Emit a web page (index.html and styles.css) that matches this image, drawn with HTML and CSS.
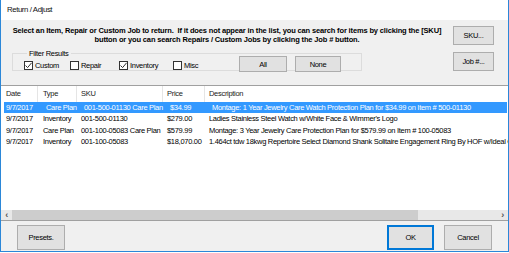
FILE: index.html
```html
<!DOCTYPE html>
<html lang="en">
  <head>
    <meta charset="UTF-8" />
    <title>Return / Adjust</title>
    <link rel="stylesheet" href="styles.css">
  </head>
  <body>
    <div class="window">
      <div class="titlebar">Return / Adjust</div>
      <div class="dialog">
        <div class="top">
          <div class="left">
            <p class="intro">
              Select an Item, Repair or Custom Job to return.&nbsp; If it does not appear in the list, you can search for items by clicking the [SKU]<br />
              button or you can search Repairs / Custom Jobs by clicking the Job # button.
            </p>
            <fieldset class="filter">
              <legend>Filter Results</legend>
              <label class="check">
                <span class="box">
                  <svg viewBox="0 0 9 9" width="9" height="9"><path d="M1.5 4.5 L3.6 6.6 L7.6 1.8" fill="none" stroke="#333" stroke-width="1" /></svg>
                </span>
                Custom
              </label>
              <label class="check">
                <span class="box"></span>
                Repair
              </label>
              <label class="check">
                <span class="box">
                  <svg viewBox="0 0 9 9" width="9" height="9"><path d="M1.5 4.5 L3.6 6.6 L7.6 1.8" fill="none" stroke="#333" stroke-width="1" /></svg>
                </span>
                Inventory
              </label>
              <label class="check">
                <span class="box"></span>
                Misc
              </label>
              <div class="filter-btn"><button class="btn btn-all">All</button></div>
              <div class="filter-btn"><button class="btn btn-none">None</button></div>
            </fieldset>
          </div>
          <div class="side">
            <button class="btn btn-side">SKU...</button>
            <button class="btn btn-side">Job #...</button>
          </div>
        </div>

        <div class="list">
          <div class="row list-head">
            <div class="cell c-date">Date</div>
            <div class="cell c-type">Type</div>
            <div class="cell">SKU</div>
            <div class="cell">Price</div>
            <div class="cell">Description</div>
          </div>
          <div class="list-body">
            <div class="row selected">
              <div class="cell c-date">9/7/2017</div>
              <div class="cell c-type">Care Plan</div>
              <div class="cell">001-500-01130 Care Plan</div>
              <div class="cell">$34.99</div>
              <div class="cell">Montage: 1 Year Jewelry Care Watch Protection Plan for $34.99 on Item # 500-01130</div>
            </div>
            <div class="row">
              <div class="cell c-date">9/7/2017</div>
              <div class="cell c-type">Inventory</div>
              <div class="cell">001-500-01130</div>
              <div class="cell">$279.00</div>
              <div class="cell">Ladies Stainless Steel Watch w/White Face &amp; Wimmer's Logo</div>
            </div>
            <div class="row">
              <div class="cell c-date">9/7/2017</div>
              <div class="cell c-type">Care Plan</div>
              <div class="cell">001-100-05083 Care Plan</div>
              <div class="cell">$579.99</div>
              <div class="cell">Montage: 3 Year Jewelry Care Protection Plan for $579.99 on Item # 100-05083</div>
            </div>
            <div class="row">
              <div class="cell c-date">9/7/2017</div>
              <div class="cell c-type">Inventory</div>
              <div class="cell">001-100-05083</div>
              <div class="cell">$18,070.00</div>
              <div class="cell">1.464ct tdw 18kwg Repertoire Select Diamond Shank Solitaire Engagement Ring By HOF w/Ideal Cut Diamond</div>
            </div>
          </div>
          <div class="hscroll">
            <span class="arrow">&lsaquo;</span>
            <div class="track"><div class="thumb"></div></div>
            <span class="arrow">&rsaquo;</span>
          </div>
        </div>

        <div class="footer">
          <button class="btn btn-foot">Presets.</button>
          <div class="footer-right">
            <button class="btn btn-foot btn-default">OK</button>
            <button class="btn btn-foot">Cancel</button>
          </div>
        </div>
      </div>
    </div>
  </body>
</html>
```

FILE: styles.css
```css
:root {
  --face: #f0f0f0;
  --accent: #2b87d8;
  --btn: #e1e1e1;
  --btn-border: #adadad;
  --select: #3399ff;
  --text: #000;
}
body {
  margin: 0;
  background: #fff;
  font-family: "Liberation Sans", Arial, sans-serif;
  font-size: 7.5px;
  letter-spacing: -0.3px;
  color: var(--text);
}
.window {
  width: 507px;
  height: 251px;
  border: 1px solid var(--accent);
  border-top: none;
  display: flex;
  flex-direction: column;
  background: var(--face);
}
.titlebar {
  height: 20px;
  line-height: 20px;
  background: #fff;
  padding-left: 6px;
  font-size: 7.8px;
  letter-spacing: -0.4px;
  color: #111;
}
.dialog {
  flex: 1;
  display: flex;
  flex-direction: column;
}
.top {
  height: 65px;
  display: flex;
  padding: 0 14px 0 11px;
}
.left {
  width: 430px;
}
.intro {
  margin: 6px 0 0 0;
  text-align: center;
  font-weight: bold;
  line-height: 9px;
  letter-spacing: -0.15px;
}
.filter {
  margin: 5px 0 0 0;
  width: 337px;
  height: 20px;
  padding: 0 0 0 11px;
  border: 1px solid #dcdcdc;
  display: grid;
  grid-template-columns: 46px 49px 54px 66px 56px 46px;
  align-items: center;
}
.filter legend {
  padding: 0 2px;
  margin-left: 3px;
  line-height: 9px;
}
.check {
  display: flex;
  align-items: center;
  gap: 2px;
  margin-top: 1px;
}
.box {
  width: 9px;
  height: 9px;
  border: 1px solid #333;
  background: #fff;
  box-sizing: border-box;
  display: flex;
}
.box svg {
  margin: -1px;
}
.btn {
  font-family: inherit;
  font-size: 7.5px;
  letter-spacing: -0.3px;
  background: var(--btn);
  border: 1px solid var(--btn-border);
  color: #000;
  padding: 0;
  margin: 0;
}
.btn-all {
  width: 48px;
  height: 16px;
  margin-top: -2px;
}
.btn-none {
  width: 46px;
  height: 16px;
  margin-top: -2px;
}
.side {
  margin-left: auto;
  padding-top: 6px;
  display: flex;
  flex-direction: column;
  gap: 7px;
}
.btn-side {
  width: 41px;
  height: 19px;
}
.list {
  height: 134px;
  background: #fff;
  border-top: 1px solid #a0a0a0;
  border-bottom: 1px solid #a0a0a0;
  display: flex;
  flex-direction: column;
  overflow: hidden;
}
.row {
  display: grid;
  grid-template-columns: 36px 39px 86px 42px 1fr;
  height: 11.5px;
  line-height: 11.5px;
  white-space: nowrap;
}
.cell {
  padding-left: 4px;
  overflow: hidden;
}
.cell + .cell {
  border-left: 1px solid transparent;
}
.c-date,
.c-type {
  padding-left: 5px;
}
.list-head {
  height: 15.5px;
  line-height: 16px;
  color: #222;
}
.list-head .cell + .cell {
  border-left-color: #e5e5e5;
}
.list-body {
  flex: 1;
}
.row.selected {
  background: var(--select);
  color: #fff;
  margin: 0 1px 0 3px;
}
.row.selected .c-date {
  padding-left: 2px;
}
.hscroll {
  height: 10px;
  display: flex;
  align-items: center;
  background: #e8e8e8;
}
.arrow {
  width: 11px;
  text-align: center;
  font-size: 9px;
  font-weight: bold;
  color: #555;
  line-height: 10px;
}
.track {
  flex: 1;
  height: 100%;
}
.thumb {
  width: 406px;
  height: 100%;
  background: #cdcdcd;
}
.footer {
  flex: 1;
  display: flex;
  align-items: flex-start;
  padding: 4px 16px 0 16px;
}
.footer-right {
  margin-left: auto;
  display: flex;
  gap: 10px;
}
.btn-foot {
  width: 48px;
  height: 25px;
}
.btn-default {
  width: 47px;
  border: 1px solid #0078d7;
  box-shadow: inset 0 0 0 1px #0078d7;
}
```
